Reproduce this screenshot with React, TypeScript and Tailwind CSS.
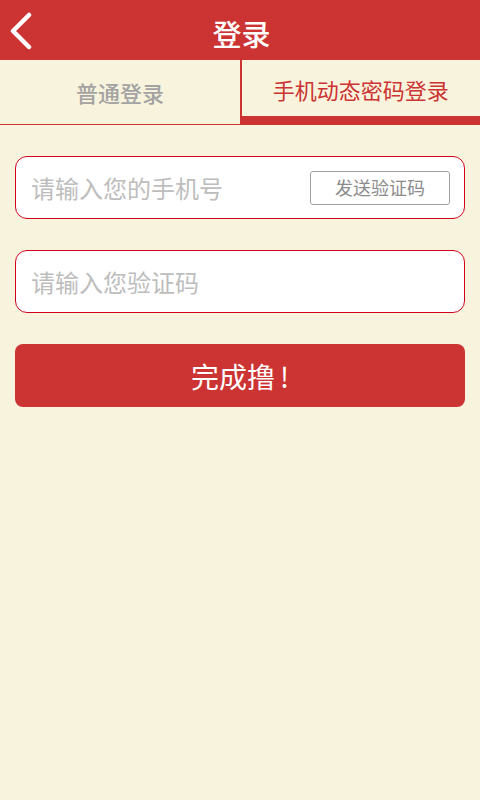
export default function App() {
  const font = { fontFamily: '"Noto Sans CJK SC", "Noto Sans", sans-serif' };
  return (
    <div className="w-[480px] h-[800px] bg-[#f8f3dc] flex flex-col" style={font}>
      <div className="h-[60px] bg-[#cc3333] relative flex items-center justify-center">
        <svg className="absolute left-[8px] top-[12px]" width="26" height="38" viewBox="0 0 26 38">
          <path d="M21 3 L5 19 L21 35" fill="none" stroke="#fff" strokeWidth="4.5" strokeLinecap="round" strokeLinejoin="round" />
        </svg>
        <span className="text-white text-[29px] font-medium leading-none mt-[6px] ml-[3px]">登录</span>
      </div>
      <div className="flex h-[65px]">
        <div className="w-[240px] flex items-center justify-center border-b-[1.5px] border-[#cc3333] text-[#a3a3a3] text-[22px] font-medium">
          普通登录
        </div>
        <div className="w-[1.5px] bg-[#cc3333]" />
        <div className="flex-1 flex flex-col">
          <div className="flex-1 flex items-center justify-center text-[#cc3333] text-[22px] pt-[2px]">
            手机动态密码登录
          </div>
          <div className="h-[9px] bg-[#cc3333]" />
        </div>
      </div>
      <div className="px-[15px] pt-[31px] flex flex-col">
        <div className="h-[63px] bg-white border border-[#d0021b] rounded-[12px] flex items-center pl-[15px] pr-[14px]">
          <span className="flex-1 text-[24px] text-[#bdbdbd]">请输入您的手机号</span>
          <div className="w-[140px] h-[34px] border border-[#a0a0a0] rounded-[3px] flex items-center justify-center text-[18px] text-[#8c8c8c]">
            发送验证码
          </div>
        </div>
        <div className="h-[63px] mt-[31px] bg-white border border-[#d0021b] rounded-[12px] flex items-center pl-[15px]">
          <span className="text-[24px] text-[#bdbdbd]">请输入您验证码</span>
        </div>
        <div className="h-[63px] mt-[31px] bg-[#cc3333] rounded-[8px] flex items-center justify-center text-white text-[28px]">
          <span>完成撸</span>
          <span className="ml-[5px]">!</span>
        </div>
      </div>
    </div>
  );
}
